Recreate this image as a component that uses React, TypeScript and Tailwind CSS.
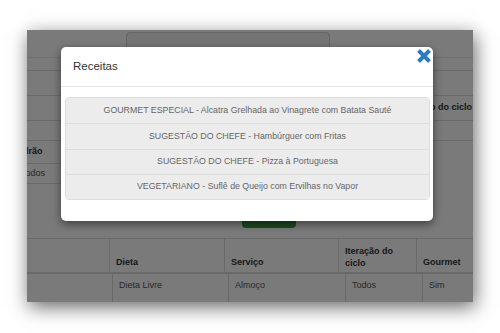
export default function App() {
  const items = [
    'GOURMET ESPECIAL - Alcatra Grelhada ao Vinagrete com Batata Sauté',
    'SUGESTÃO DO CHEFE - Hambúrguer com Fritas',
    'SUGESTÃO DO CHEFE - Pizza à Portuguesa',
    'VEGETARIANO - Suflê de Queijo com Ervilhas no Vapor',
  ]

  return (
    <div className="w-[500px] h-[333px] bg-white pl-[27px] pt-[30px] font-['Liberation_Sans',Arial,sans-serif]">
      <div className="relative w-[446px] h-[272px] overflow-hidden bg-white shadow-[2px_5px_18px_rgba(0,0,0,0.6)]">
        {/* page behind the dialog */}
        <div className="flex flex-col text-[9px] text-[#333]">
          <div className="h-[28px] pl-[99px] pt-[2px] border-b border-[#ececec]">
            <div className="w-[204px] h-[25px] rounded-t-[4px] border border-[#d6d6d6] bg-[#f2f2f2]" />
          </div>
          <div className="h-[13px] border-b border-[#dcdcdc]" />
          <div className="h-[25px] border-b border-[#dcdcdc]" />
          <div className="h-[25px] border-b border-[#dcdcdc] flex items-center justify-end pr-[1px]">
            <span className="font-bold">Iteração do ciclo</span>
          </div>
          <div className="h-[20px] border-b border-[#dcdcdc]" />
          <div className="w-[220px] flex flex-col">
            <div className="h-[23px] border-b border-[#dcdcdc] flex items-center ml-[-15px]">
              <span className="font-bold">Padrão</span>
            </div>
            <div className="h-[20px] border-b border-[#dcdcdc] flex items-center ml-[-6px]">
              <span className="text-[#555]">Todos</span>
            </div>
          </div>
          <div className="h-[54px] pl-[215px] pt-[16px]">
            <div className="w-[54px] h-[28px] rounded-[4px] bg-[#3e9e48]" />
          </div>

          {/* table */}
          <div className="flex h-[36px] border-t border-b-2 border-[#dcdcdc] font-bold">
            <div className="w-[83px] border-r border-[#dcdcdc]" />
            <div className="w-[115px] border-r border-[#dcdcdc] flex items-end pl-[6px] pb-[3px]">Dieta</div>
            <div className="w-[114px] border-r border-[#dcdcdc] flex items-end pl-[6px] pb-[3px]">Serviço</div>
            <div className="w-[78px] border-r border-[#dcdcdc] flex items-end pl-[6px] pb-[3px] leading-[12px]">
              Iteração do<br />ciclo
            </div>
            <div className="flex-1 flex items-end pl-[6px] pb-[3px]">Gourmet</div>
          </div>
          <div className="flex h-[28px] text-[#555]">
            <div className="w-[86px] border-r border-[#dcdcdc]" />
            <div className="w-[116px] border-r border-[#dcdcdc] flex items-center pl-[6px] pb-[5px]">Dieta Livre</div>
            <div className="w-[117px] border-r border-[#dcdcdc] flex items-center pl-[6px] pb-[5px]">Almoço</div>
            <div className="w-[77px] border-r border-[#dcdcdc] flex items-center pl-[6px] pb-[5px]">Todos</div>
            <div className="flex-1 flex items-center pl-[6px] pb-[5px]">Sim</div>
          </div>
        </div>

        {/* backdrop */}
        <div className="absolute inset-0 bg-black/[0.52]" />

        {/* dialog */}
        <div className="absolute left-[34px] top-[17px] w-[372px] h-[174px] bg-white rounded-[5px] shadow-[0_3px_9px_rgba(0,0,0,0.5)]">
          <div className="h-[40px] border-b border-[#e5e5e5] flex items-center pl-[12px] pt-[1px] text-[11.5px] text-[#333]">
            Receitas
          </div>
          <div className="pt-[10px] pl-[4px] pr-[3px]">
            <div className="flex flex-col rounded-[4px] overflow-hidden border border-[#dddddd]">
              {items.map((t, i) => (
                <div
                  key={i}
                  className="h-[25.3px] flex items-center justify-center bg-[#ececec] border-t border-[#dddddd] first:border-t-0 text-[8.8px] text-[#666]"
                >
                  {t}
                </div>
              ))}
            </div>
          </div>
          <svg
            className="absolute right-[1px] top-[1px]"
            width="16"
            height="16"
            viewBox="0 0 16 16"
          >
            <path d="M2.5 2.5L13.5 13.5M13.5 2.5L2.5 13.5" stroke="#2e7bc2" strokeWidth="4" />
          </svg>
        </div>
      </div>
    </div>
  )
}
